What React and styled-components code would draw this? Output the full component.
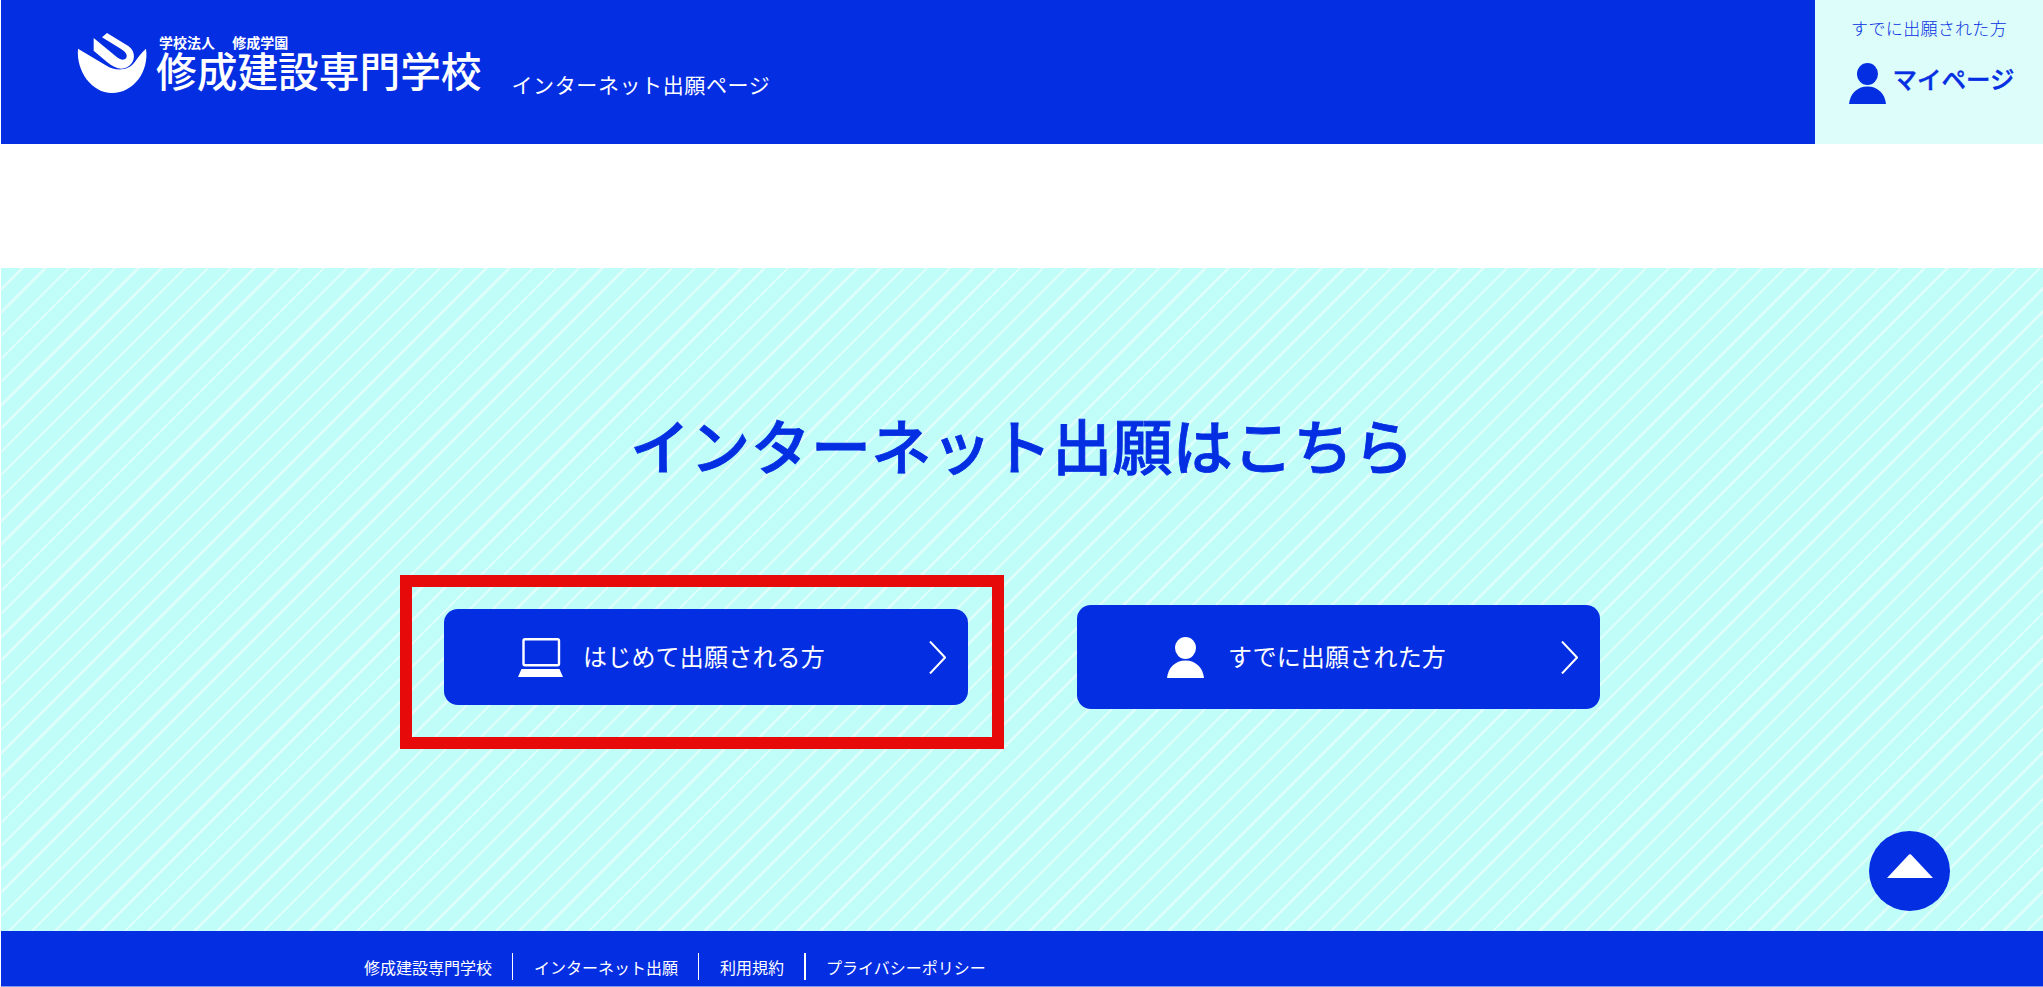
import React from "react";
import styled, { createGlobalStyle } from "styled-components";

const BLUE = "#042ee2";
const MINT = "#dcfdf9";

const GlobalStyle = createGlobalStyle`
    body {
        margin: 0;
        background: #fff;
        font-family: "Noto Sans CJK JP", "Noto Sans", sans-serif;
    }
`

const Page = styled.div`
    padding-left: 1px;
`

const Header = styled.header`
    height: 144px;
    display: flex;
    background: ${BLUE};
    color: white;
`

const Logo = styled.svg`
    width: 80px;
    height: 70px;
    margin: 28px 0 0 71px;
    flex: none;
`

const BrandText = styled.div`
    margin: 34px 0 0 4px;
    display: flex;
    flex-direction: column;
`

const Corporation = styled.div`
    padding-left: 3px;
    font-size: 14px;
    line-height: 16px;
    font-weight: 700;
    word-spacing: 14px;
`

const SchoolName = styled.div`
    font-size: 40.7px;
    line-height: 40px;
    font-weight: 500;
    white-space: nowrap;
`

const SiteName = styled.div`
    margin: 69px 0 0 30px;
    font-size: 21px;
    line-height: 30px;
    letter-spacing: 0.6px;
    white-space: nowrap;
`

const MyPagePanel = styled.a`
    margin-left: auto;
    width: 228px;
    padding-top: 16px;
    box-sizing: border-box;
    display: flex;
    flex-direction: column;
    align-items: center;
    background: ${MINT};
    color: ${BLUE};
`

const MyPageLead = styled.div`
    font-size: 17px;
    line-height: 24px;
    letter-spacing: 0.3px;
    font-weight: 300;
`

const MyPageRow = styled.div`
    margin: 23px 0 0 6px;
    display: flex;
    align-items: flex-start;
    gap: 6px;
`

const MyPageLabel = styled.span`
    font-size: 24.5px;
    line-height: 32px;
    font-weight: 500;
    -webkit-text-stroke: 0.4px ${BLUE};
`

const Spacer = styled.div`
    height: 124px;
`

const Hero = styled.main`
    position: relative;
    height: 663px;
    padding-top: 146px;
    box-sizing: border-box;
    background: repeating-linear-gradient(
        135deg,
        #c0fdf8 0,
        #c0fdf8 14px,
        #defefb 14px,
        #defefb 16.4px
    );
`

const Title = styled.h1`
    margin: 0;
    font-size: 60px;
    line-height: 60px;
    font-weight: 500;
    letter-spacing: 0.3px;
    text-align: center;
    color: ${BLUE};
    -webkit-text-stroke: 0.8px ${BLUE};
`

const EntryRow = styled.div`
    margin: 101px 0 0 399px;
    display: flex;
    align-items: flex-start;
    gap: 73px;
`

const HighlightFrame = styled.div`
    padding: 22px 24px 32px 32px;
    border: 12px solid #e60a0a;
`

const EntryButton = styled.a`
    width: ${props => props.$width}px;
    height: ${props => props.$height}px;
    margin-top: ${props => props.$top}px;
    padding: 0 22px 0 ${props => props.$left}px;
    box-sizing: border-box;
    display: flex;
    align-items: center;
    gap: ${props => props.$gap}px;
    border-radius: 14px;
    background: ${BLUE};
    color: white;
    font-size: 24px;
    letter-spacing: 0.2px;
`

const EntryLabel = styled.span`
    margin-bottom: 4px;
    white-space: nowrap;
`

const Icon = styled.svg`
    width: ${props => props.$width}px;
    height: ${props => props.$height}px;
    flex: none;
`

const Chevron = styled(Icon)`
    margin-left: auto;
`

const TopButton = styled.a`
    position: absolute;
    right: 93px;
    bottom: 20px;
    width: 81px;
    height: 80px;
    display: flex;
    align-items: flex-start;
    justify-content: center;
    padding-top: 23px;
    box-sizing: border-box;
    border-radius: 50%;
    background: ${BLUE};
`

const Footer = styled.footer`
    height: 55px;
    padding: 22px 0 0 363px;
    box-sizing: border-box;
    display: flex;
    align-items: flex-start;
    background: ${BLUE};
`

const FooterLink = styled.a`
    height: 27px;
    padding: 0 ${props => props.$last ? 0 : 20}px 0 ${props => props.$first ? 0 : props.$last ? 20 : 21}px;
    border-right: ${props => props.$last ? 0 : props.$thick ? 2.5 : 1.5}px solid white;
    font-size: 16px;
    line-height: 29px;
    color: white;
    white-space: nowrap;
`

const BottomEdge = styled.div`
    height: 1px;
    background: #8298f0;
`

const PersonIcon = ({ color }) => (
    <Icon $width={37} $height={41} viewBox="0 0 37 41">
        <ellipse cx="18.5" cy="11" rx="10.5" ry="11" fill={color} />
        <path d="M0 41C1 31 8 23.5 18.5 23.5S36 31 37 41Z" fill={color} />
    </Icon>
);

const LaptopIcon = () => (
    <Icon $width={45} $height={39} viewBox="0 0 45 39">
        <rect x="5.5" y="1.2" width="35.5" height="26" rx="1.5" fill="none" stroke="white" strokeWidth="2.4" />
        <path d="M3.5 31H41.5L45 39H0Z" fill="white" />
    </Icon>
);

const ChevronIcon = () => (
    <Chevron $width={17} $height={33} viewBox="0 0 17 33">
        <polyline points="1,0.5 16,16.5 1,32.5" fill="none" stroke="white" strokeWidth="2" />
    </Chevron>
);

const App = () => (
    <Page>
        <GlobalStyle />
        <Header>
            <Logo viewBox="0 0 240 210">
                <path d="M18 62L105 114C130 130 170 130 190 100C200 85 210 72 222 62C232 130 185 195 120 195C60 195 12 130 18 62Z" fill="white" />
                <path d="M65 30L135 88C150 100 166 96 164 82C163 74 155 68 146 62L90 28L105 15L170 55C192 70 192 105 165 118C145 128 125 118 105 102L65 68Z" fill="white" />
            </Logo>
            <BrandText>
                <Corporation>学校法人 修成学園</Corporation>
                <SchoolName>修成建設専門学校</SchoolName>
            </BrandText>
            <SiteName>インターネット出願ページ</SiteName>
            <MyPagePanel>
                <MyPageLead>すでに出願された方</MyPageLead>
                <MyPageRow>
                    <PersonIcon color={BLUE} />
                    <MyPageLabel>マイページ</MyPageLabel>
                </MyPageRow>
            </MyPagePanel>
        </Header>
        <Spacer />
        <Hero>
            <Title>インターネット出願はこちら</Title>
            <EntryRow>
                <HighlightFrame>
                    <EntryButton $width={524} $height={96} $top={0} $left={74} $gap={20}>
                        <LaptopIcon />
                        <EntryLabel>はじめて出願される方</EntryLabel>
                        <ChevronIcon />
                    </EntryButton>
                </HighlightFrame>
                <EntryButton $width={523} $height={104} $top={30} $left={90} $gap={24}>
                    <PersonIcon color="white" />
                    <EntryLabel>すでに出願された方</EntryLabel>
                    <ChevronIcon />
                </EntryButton>
            </EntryRow>
            <TopButton>
                <Icon $width={46} $height={24} viewBox="0 0 46 24">
                    <path d="M0 24L22 0.5Q23 0 24 0.5L46 24Z" fill="white" />
                </Icon>
            </TopButton>
        </Hero>
        <Footer>
            <FooterLink $first>修成建設専門学校</FooterLink>
            <FooterLink>インターネット出願</FooterLink>
            <FooterLink $thick>利用規約</FooterLink>
            <FooterLink $last>プライバシーポリシー</FooterLink>
        </Footer>
        <BottomEdge />
    </Page>
);

export default App;
